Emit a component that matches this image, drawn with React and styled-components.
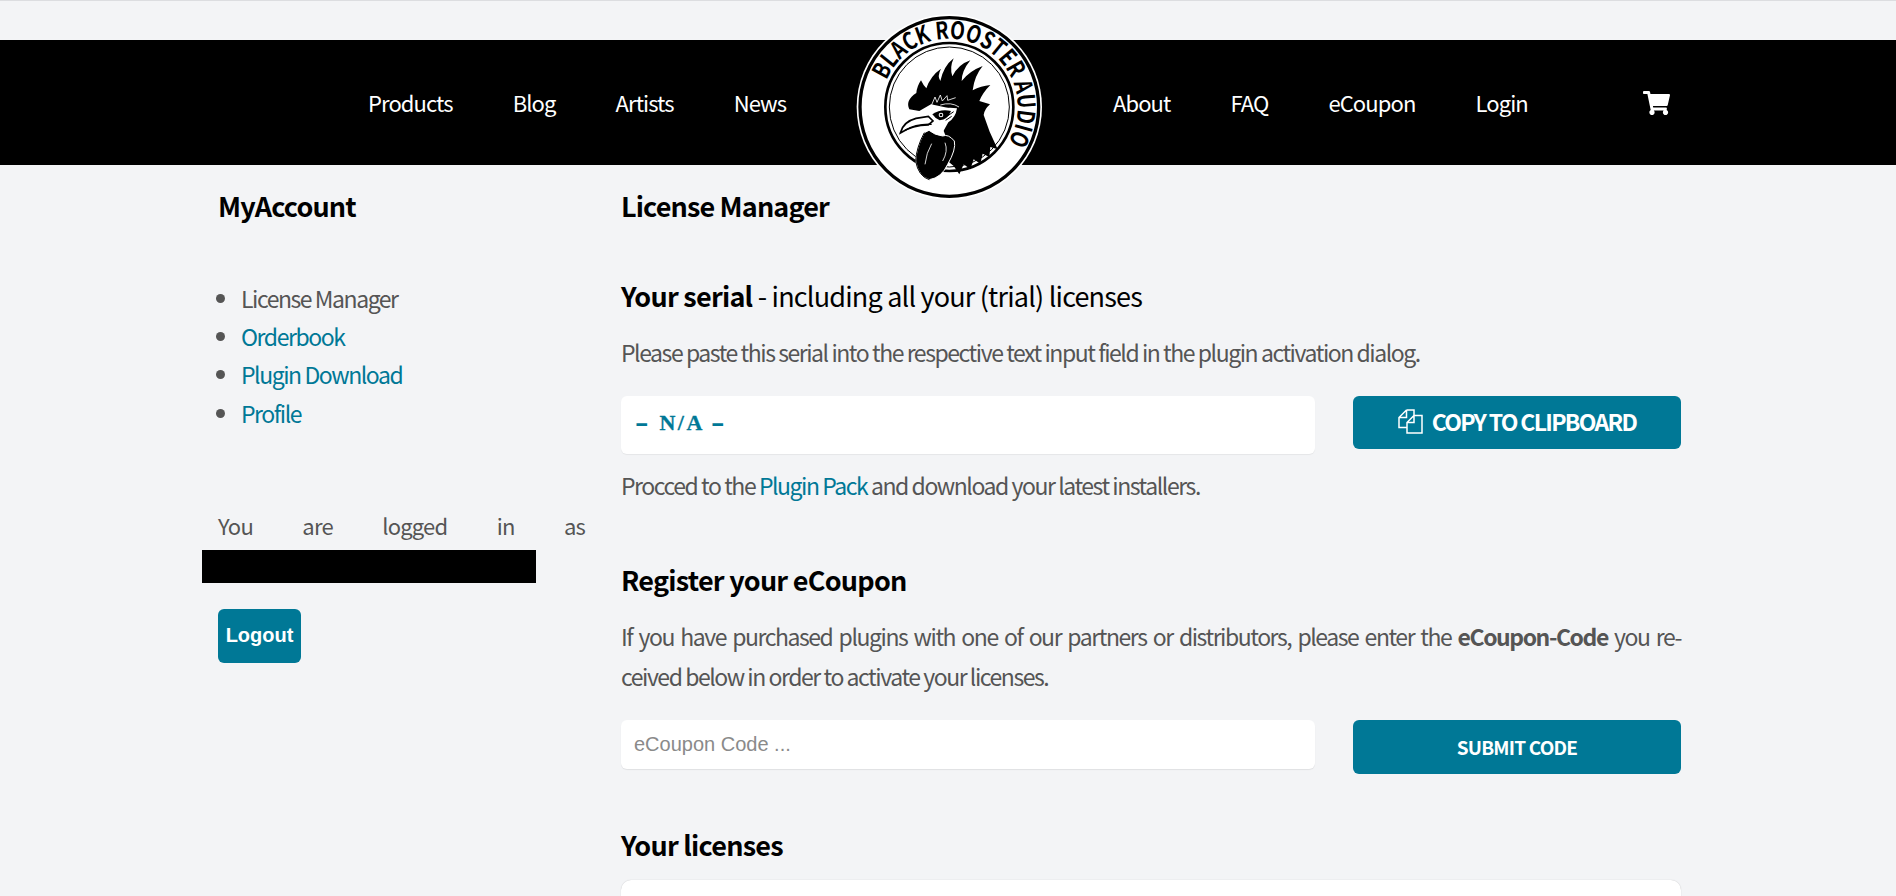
import styled, { createGlobalStyle } from 'styled-components';

const GlobalStyle = createGlobalStyle`
  html, body {
    margin: 0;
    height: 896px;
    overflow: hidden;
    background: #f3f4f6;
  }
  body {
    font-family: "Noto Sans CJK SC", "Liberation Sans", sans-serif;
    color: #555;
  }
`;

const Page = styled.div`
  border-top: 1px solid #dcdde0;
  padding-top: 39px;
`;

const Header = styled.header`
  height: 125px;
  background: #000;
  display: flex;
  justify-content: center;
`;

const NavInner = styled.nav`
  position: relative;
  width: 1460px;
  display: flex;
  align-items: center;
  padding-left: 150px;
  box-sizing: border-box;
`;

const NavGroup = styled.div`
  display: flex;
  gap: 60px;
  margin-top: -2px;
  width: ${(p) => (p.$width ? `${p.$width}px` : 'auto')};
`;

const NavLink = styled.a`
  color: #fff;
  font-size: 22px;
  line-height: 30px;
  letter-spacing: -0.9px;
  text-decoration: none;
`;

const Cart = styled.svg`
  width: 27px;
  height: 24px;
  margin-left: 115px;
  fill: #fff;
`;

const LogoWrap = styled.div`
  position: absolute;
  left: 623px;
  top: -39px;
  width: 220px;
  height: 210px;
`;

const Main = styled.main`
  width: 1500px;
  margin: 0 auto;
  display: flex;
`;

const Side = styled.aside`
  width: 367px;
  margin-left: 20px;
  margin-right: 36px;
  flex: none;
`;

const Content = styled.section`
  width: 1060px;
  flex: none;
`;

const PageTitle = styled.h2`
  margin: 0;
  padding-top: 23px;
  font-size: 27px;
  line-height: 36px;
  font-weight: 700;
  color: #000;
  letter-spacing: -0.85px;
`;

const SideList = styled.ul`
  margin: 55px 0 0;
  padding: 0 0 0 23px;
  font-size: 23px;
  line-height: 38.2px;
  letter-spacing: -1.45px;
  li::marker { color: #555; }
`;

const SideLink = styled.a`
  color: #007896;
  text-decoration: none;
`;

const LoggedIn = styled.p`
  margin: 75px 0 0;
  font-size: 22px;
  line-height: 36px;
  letter-spacing: -0.8px;
  text-align: justify;
  text-align-last: justify;
`;

const Redacted = styled.div`
  width: 334px;
  height: 33px;
  margin: 7px 0 0 -16px;
  background: #000;
`;

const LogoutButton = styled.button`
  display: block;
  margin-top: 26px;
  width: 83px;
  height: 54px;
  border: 0;
  border-radius: 6px;
  background: #007896;
  color: #fff;
  font: 700 20px "Liberation Sans", sans-serif;
  padding: 0;
`;

const SectionTitle = styled.h3`
  margin: ${(p) => p.$top}px 0 0;
  font-size: 27px;
  line-height: 36px;
  font-weight: 700;
  color: #000;
  letter-spacing: -0.75px;
  span { font-weight: 400; letter-spacing: -0.8px; }
`;

const Para = styled.p`
  margin: ${(p) => p.$top || 0}px 0 0;
  font-size: 23px;
  line-height: 39.5px;
  letter-spacing: -1.45px;
  a { color: #007896; text-decoration: none; }
  b { font-weight: 700; }
`;

const JustifiedLine = styled.span`
  display: block;
  text-align: justify;
  text-align-last: justify;
`;

const FieldRow = styled.div`
  display: flex;
  justify-content: space-between;
  align-items: flex-start;
  margin-top: ${(p) => p.$top}px;
`;

const SerialBox = styled.div`
  width: 694px;
  height: 58px;
  box-sizing: border-box;
  padding: 0 14px;
  line-height: 58px;
  white-space: pre;
  background: #fff;
  border-radius: 6px;
  box-shadow: 0 1px 1px rgba(0, 0, 0, 0.06);
  font-family: "Liberation Mono", monospace;
  font-weight: 700;
  font-size: 22px;
  color: #007896;
`;

const SerialDash = styled.span`
  display: inline-block;
  transform: scaleX(1.7);
`;

const SlabText = styled.span`
  font: 700 22px "Liberation Serif", serif;
  letter-spacing: 2.5px;
  margin: 0 -7px 0 -2px;
  -webkit-text-stroke: 0.3px #007896;
`;

const CodeInput = styled.input`
  width: 694px;
  height: 49px;
  box-sizing: border-box;
  padding: 0 13px;
  border: 0;
  outline: 0;
  background: #fff;
  border-radius: 6px;
  box-shadow: 0 1px 1px rgba(0, 0, 0, 0.08);
  font: 20px "Liberation Sans", sans-serif;
  &::placeholder { color: #8a8a8a; opacity: 1; }
`;

const ActionButton = styled.button`
  width: 328px;
  height: ${(p) => p.$height}px;
  border: 0;
  border-radius: 6px;
  background: #007896;
  color: #fff;
  display: flex;
  align-items: center;
  justify-content: center;
  gap: 9px;
  font-family: "Noto Sans CJK SC", sans-serif;
  font-weight: 700;
  font-size: ${(p) => p.$size}px;
  letter-spacing: ${(p) => p.$track}px;
  padding: 0 0 2px;
`;

const LicenseCard = styled.div`
  margin-top: 17px;
  height: 200px;
  background: #fff;
  border-radius: 10px;
  box-shadow: 0 0 1px rgba(0, 0, 0, 0.25);
`;

function Logo() {
  return (
    <svg viewBox="0 0 660 630" width="220" height="210">
      <defs>
        <path id="ring" d="M136.3 237.9 A205 205 0 1 1 498.9 426.6" />
      </defs>
      <circle cx="325" cy="318" r="278" fill="#fff" />
      <circle cx="325" cy="318" r="268" fill="none" stroke="#000" strokeWidth="10" />
      <circle cx="325" cy="318" r="192" fill="none" stroke="#000" strokeWidth="8" />
      <circle cx="325" cy="318" r="180" fill="none" stroke="#000" strokeWidth="3" />
      <text fontFamily="Noto Sans CJK SC, sans-serif" fontWeight="700" fontSize="72" fill="#000">
        <textPath href="#ring" textLength="672" lengthAdjust="spacingAndGlyphs">BLACK ROOSTER AUDIO</textPath>
      </text>
      {/* comb and neck */}
      <path d="M205 325 Q192 298 226 276 Q228 255 240 238 Q248 255 256 262 Q268 225 300 203 Q288 225 298 240 Q308 195 338 172 Q325 200 334 226 Q352 190 388 178 Q362 210 362 240 Q385 210 425 195 Q400 225 395 268 Q420 255 448 252 Q425 275 415 300 L447 310 Q430 325 428 342 Q438 370 446 392 L470 445 L448 438 L445 468 L425 458 L418 488 L398 475 L388 505 L368 490 L355 520 L338 495 L320 480 L320 420 L300 370 L340 340 L340 325 L270 310 L235 330 Z" fill="#000" />
      {/* feather strokes */}
      <path d="M270 316 L282 288 L288 304 L298 282 L304 300 L318 284 L320 298 L344 290 M298 312 Q330 302 354 318" fill="none" stroke="#fff" strokeWidth="2.5" />
      {/* face and eye */}
      <path d="M268 336 Q300 316 348 322 Q344 350 322 364 L304 396 L274 376 Q264 352 268 336 Z" fill="#fff" />
      <path d="M274 340 Q300 322 330 330 Q320 356 296 358 Q282 352 274 340 Z" fill="#000" />
      <circle cx="300" cy="342" r="7" fill="#fff" />
      <circle cx="300" cy="342" r="4" fill="#000" />
      <path d="M318 346 L338 332 M314 358 L332 346" stroke="#000" strokeWidth="3" />
      {/* beak */}
      <path d="M178 396 Q186 362 225 352 L262 346 L276 360 L262 372 Q215 372 178 396 Z" fill="#fff" stroke="#000" strokeWidth="5" />
      <path d="M192 388 Q225 368 272 370" fill="none" stroke="#000" strokeWidth="4" />
      {/* wattle */}
      <path d="M250 395 Q226 440 224 480 Q232 526 265 536 Q302 530 320 490 Q346 445 340 420 Q322 398 305 405 Q280 402 264 388 Z" fill="#000" stroke="#fff" strokeWidth="3" />
      <path d="M250 395 Q226 440 224 480 Q232 526 265 536" fill="none" stroke="#000" strokeWidth="3" />
      <path d="M272 428 Q256 455 252 490 M312 425 Q322 450 305 480" fill="none" stroke="#fff" strokeWidth="2.5" />
    </svg>
  );
}

export default function App() {
  return (
    <Page>
      <GlobalStyle />
      <Header>
        <NavInner>
          <NavGroup $width={745}>
            <NavLink>Products</NavLink>
            <NavLink>Blog</NavLink>
            <NavLink>Artists</NavLink>
            <NavLink>News</NavLink>
          </NavGroup>
          <NavGroup>
            <NavLink>About</NavLink>
            <NavLink>FAQ</NavLink>
            <NavLink>eCoupon</NavLink>
            <NavLink>Login</NavLink>
          </NavGroup>
          <Cart viewBox="0 0 576 512">
            <path d="M528.12 301.32l47.27-208C578.8 78.3 567.4 64 552 64H159.2l-9.2-44.8C147.8 8 137.9 0 126.5 0H24C10.7 0 0 10.7 0 24v16c0 13.3 10.7 24 24 24h69.9l70.2 343.4C147.3 417.1 136 435.2 136 456c0 30.9 25.1 56 56 56s56-25.1 56-56c0-15.7-6.4-29.8-16.8-40h209.6C430.4 426.2 424 440.3 424 456c0 30.9 25.1 56 56 56s56-25.1 56-56c0-22.2-12.9-41.3-31.6-50.4l5.5-24.3c3.4-15-8-29.3-23.4-29.3H218.1l-6.5-32h293.1c11.2 0 20.9-7.8 23.4-18.7z" />
          </Cart>
          <LogoWrap><Logo /></LogoWrap>
        </NavInner>
      </Header>
      <Main>
        <Side>
          <PageTitle>MyAccount</PageTitle>
          <SideList>
            <li>License Manager</li>
            <li><SideLink>Orderbook</SideLink></li>
            <li><SideLink>Plugin Download</SideLink></li>
            <li><SideLink>Profile</SideLink></li>
          </SideList>
          <LoggedIn>You are logged in as</LoggedIn>
          <Redacted />
          <LogoutButton>Logout</LogoutButton>
        </Side>
        <Content>
          <PageTitle>License Manager</PageTitle>
          <SectionTitle $top={54}>Your serial <span>- including all your (trial) licenses</span></SectionTitle>
          <Para $top={19}>Please paste this serial into the respective text input field in the plugin activation dialog.</Para>
          <FieldRow $top={23}>
            <SerialBox><SerialDash>-</SerialDash> <SlabText>N/A</SlabText> <SerialDash>-</SerialDash></SerialBox>
            <ActionButton $height={53} $size={23} $track={-1.7}>
              <svg width="25" height="25" viewBox="0 0 25 25" fill="none" stroke="#fff" strokeWidth="1.5">
                <path d="M8.5 1H16V6.5M8.5 1L1 8.5V18.5H9M8.5 1V8.5H1" />
                <path d="M16 6.5H24V24H9V13.5ZM16 6.5V13.5H9" />
              </svg>
              COPY TO CLIPBOARD
            </ActionButton>
          </FieldRow>
          <Para $top={12}>Procced to the <a>Plugin Pack</a> and download your latest installers.</Para>
          <SectionTitle $top={57}>Register your eCoupon</SectionTitle>
          <Para $top={19}>
            <JustifiedLine>If you have purchased plugins with one of our partners or distributors, please enter the <b>eCoupon-Code</b> you re-</JustifiedLine>
            ceived below in order to activate your licenses.
          </Para>
          <FieldRow $top={24}>
            <CodeInput placeholder="eCoupon Code ..." />
            <ActionButton $height={54} $size={19} $track={-0.8}>SUBMIT CODE</ActionButton>
          </FieldRow>
          <SectionTitle $top={53}>Your licenses</SectionTitle>
          <LicenseCard />
        </Content>
      </Main>
    </Page>
  );
}
